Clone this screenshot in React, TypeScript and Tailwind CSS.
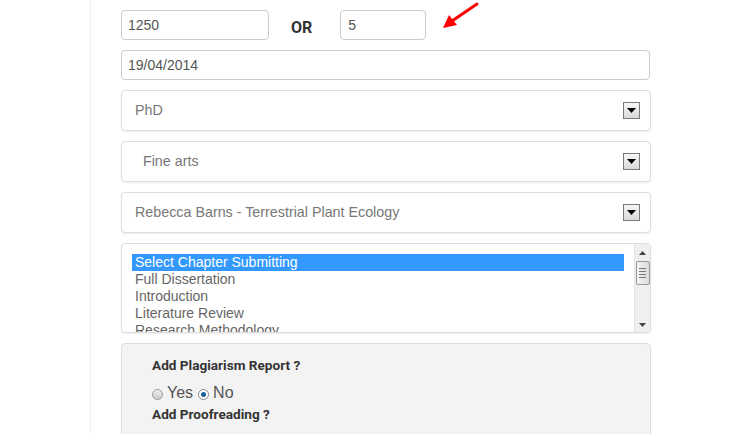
import React from "react";

const arial = { fontFamily: '"Liberation Sans", Arial, sans-serif' };
const roboto = { fontFamily: 'Roboto, "Liberation Sans", sans-serif' };

function DropBtn() {
  return (
    <div className="w-[17px] h-[17px] border border-[#7a7a7a] bg-gradient-to-b from-[#f6f6f6] to-[#d9d9d9] flex items-center justify-center">
      <svg width="9" height="5" viewBox="0 0 9 5">
        <path d="M0 0 H9 L4.5 5 Z" fill="#000" />
      </svg>
    </div>
  );
}

function SelectBox({ text }: { text: string }) {
  return (
    <div className="shrink-0 mt-[10px] h-[41px] w-[530px] border border-[#ddd] rounded-[4px] bg-white shadow-[0_1px_2px_rgba(0,0,0,0.07)] flex items-center justify-between pl-[13px] pr-[10px]">
      <span className="text-[14.3px] text-[#777] whitespace-pre pt-[1px]" style={arial}>{text}</span>
      <DropBtn />
    </div>
  );
}

export default function App() {
  const items = [
    "Select Chapter Submitting",
    "Full Dissertation",
    "Introduction",
    "Literature Review",
    "Research Methodology",
  ];
  return (
    <div className="w-[751px] h-[434px] overflow-hidden bg-white flex relative" style={arial}>
      <div className="w-[91px] h-full border-r border-[#eeeeee] shrink-0" />
      <div className="pl-[30px] pt-[10px] flex flex-col">
        <div className="shrink-0 flex items-center">
          <div className="w-[148px] h-[30px] border border-[#ccc] rounded-[4px] flex items-center px-[6px] text-[14px] text-[#555]">1250</div>
          <div className="ml-[22px] mr-[28px] pt-[5px] text-[16px] font-bold text-[#333]" style={roboto}>OR</div>
          <div className="w-[86px] h-[30px] border border-[#ccc] rounded-[4px] flex items-center px-[7px] text-[14px] text-[#555]">5</div>
        </div>
        <div className="shrink-0 mt-[10px] w-[529px] h-[30px] border border-[#ccc] rounded-[4px] flex items-center px-[6px] text-[14px] text-[#555]">19/04/2014</div>
        <SelectBox text="PhD" />
        <SelectBox text="  Fine arts" />
        <SelectBox text="Rebecca Barns - Terrestrial Plant Ecology" />
        <div className="shrink-0 mt-[10px] w-[530px] h-[90px] border border-[#ddd] rounded-[4px] bg-white shadow-[0_1px_2px_rgba(0,0,0,0.07)] flex overflow-hidden">
          <div className="flex-1 pl-[10px] pt-[10px] pr-[10px] overflow-hidden">
            {items.map((t, i) => (
              <div
                key={t}
                className={`h-[17px] leading-[17px] text-[14px] pl-[3px] whitespace-nowrap ${i === 0 ? "bg-[#3399ff] text-white" : "text-[#666]"}`}
              >
                {t}
              </div>
            ))}
          </div>
          <div className="w-[16px] h-full bg-[#efefef] border-l border-[#e4e4e4] flex flex-col items-center">
            <div className="h-[17px] flex items-center justify-center">
              <svg width="7" height="4" viewBox="0 0 7 4"><path d="M0 4 H7 L3.5 0 Z" fill="#444" /></svg>
            </div>
            <div className="w-[14px] h-[24px] border border-[#999] rounded-[2px] bg-gradient-to-r from-[#f4f4f4] to-[#dcdcdc] flex flex-col items-center justify-center gap-[2px]">
              <div className="w-[7px] h-[1px] bg-[#777]" />
              <div className="w-[7px] h-[1px] bg-[#777]" />
              <div className="w-[7px] h-[1px] bg-[#777]" />
              <div className="w-[7px] h-[1px] bg-[#777]" />
            </div>
            <div className="flex-1" />
            <div className="h-[14px] flex items-center justify-center">
              <svg width="7" height="4" viewBox="0 0 7 4"><path d="M0 0 H7 L3.5 4 Z" fill="#444" /></svg>
            </div>
          </div>
        </div>
        <div className="shrink-0 mt-[10px] w-[530px] h-[120px] border border-[#ddd] rounded-[4px] bg-[#f3f3f3] pl-[30px] pt-[13px]">
          <div className="text-[13.6px] font-bold text-[#333] leading-[16px]" style={roboto}>Add Plagiarism Report ?</div>
          <div className="flex items-center mt-[11px] text-[16px] text-[#555] leading-[18px]">
            <span className="w-[11px] h-[11px] rounded-full border border-[#999] bg-gradient-to-b from-[#eee] to-[#ccc] mr-[4px] mt-[2px]" />
            <span>Yes</span>
            <span className="w-[11px] h-[11px] rounded-full border border-[#888] bg-white ml-[5px] mr-[4px] mt-[2px] flex items-center justify-center">
              <span className="w-[5px] h-[5px] rounded-full bg-[#1a5f9e]" />
            </span>
            <span>No</span>
          </div>
          <div className="mt-[4px] text-[13.6px] font-bold text-[#333] leading-[16px]" style={roboto}>Add Proofreading ?</div>
        </div>
      </div>
      <svg className="absolute left-[440px] top-[2px]" width="40" height="30" viewBox="0 0 40 30">
        <line x1="37" y1="2" x2="12" y2="19" stroke="#f00" strokeWidth="3" strokeLinecap="round" />
        <path d="M3 26 L9 13 L17 23 Z" fill="#f00" />
      </svg>
    </div>
  );
}
